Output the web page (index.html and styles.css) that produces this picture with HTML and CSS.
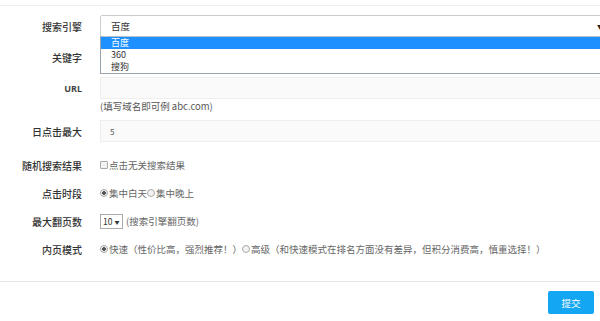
FILE: index.html
```html
<!DOCTYPE html>
<html lang="zh-CN">
<head>
    <meta charset="UTF-8">
    <meta name="viewport" content="width=device-width, initial-scale=1.0">
    <title>添加任务</title>
    <link rel="stylesheet" href="styles.css">
</head>
<body>
    <div class="topbar"></div>
    <form class="task-form">
        <div class="form-row">
            <label class="row-label">搜索引擎</label>
            <div class="row-field">
                <div class="engine-select">
                    <span>百度</span>
                    <span class="caret">&#9660;</span>
                    <ul class="engine-options">
                        <li class="active">百度</li>
                        <li>360</li>
                        <li>搜狗</li>
                    </ul>
                </div>
            </div>
        </div>
        <div class="form-row">
            <label class="row-label">关键字</label>
            <div class="row-field">
                <input type="text" class="text-input" name="keyword">
            </div>
        </div>
        <div class="form-row">
            <label class="row-label latin">URL</label>
            <div class="row-field">
                <input type="text" class="text-input" name="url">
            </div>
        </div>
        <div class="help-text">(填写域名即可例 abc.com)</div>
        <div class="form-row">
            <label class="row-label">日点击最大</label>
            <div class="row-field">
                <input type="text" class="text-input" name="max" value="5">
            </div>
        </div>
        <div class="form-row tall first-tall">
            <label class="row-label">随机搜索结果</label>
            <div class="row-field inline">
                <input type="checkbox" class="tick box"><span>点击无关搜索结果</span>
            </div>
        </div>
        <div class="form-row tall">
            <label class="row-label">点击时段</label>
            <div class="row-field inline">
                <input type="radio" class="tick dot" name="period" checked><span>集中白天</span>
                <input type="radio" class="tick dot" name="period"><span>集中晚上</span>
            </div>
        </div>
        <div class="form-row tall">
            <label class="row-label">最大翻页数</label>
            <div class="row-field inline">
                <span class="page-select">10 <span class="small-caret">&#9660;</span></span>
                <span class="note">(搜索引擎翻页数)</span>
            </div>
        </div>
        <div class="form-row tall">
            <label class="row-label">内页模式</label>
            <div class="row-field inline">
                <input type="radio" class="tick dot" name="mode" checked><span>快速（性价比高，强烈推荐！）</span>
                <input type="radio" class="tick dot" name="mode"><span>高级（和快速模式在排名方面没有差异，但积分消费高，慎重选择！）</span>
            </div>
        </div>
    </form>
    <div class="form-footer">
        <button type="button" class="submit-btn">提交</button>
    </div>
</body>
</html>
```

FILE: styles.css
```css
html, body {
    overflow: hidden;
}

body {
    margin: 0;
    padding: 0;
    width: 600px;
    height: 321px;
    background: #fff;
    font-family: "Noto Sans CJK SC", "Open Sans", sans-serif;
    color: #555;
    font-size: 9.5px;
}

.topbar {
    height: 5px;
    border-bottom: 1px solid #eee;
}

.task-form {
    padding-top: 9px;
    height: 266px;
}

.form-row {
    display: flex;
    align-items: center;
    height: 22px;
    margin-bottom: 9px;
}

.form-row.tall {
    height: 28px;
    margin-bottom: 0;
}

.form-row.first-tall {
    margin-top: 3px;
}

.row-label {
    width: 82px;
    margin-right: 18px;
    text-align: right;
    font-size: 10px;
    font-weight: 500;
    color: #333;
    flex-shrink: 0;
}

.row-label.latin {
    font-family: "Open Sans", sans-serif;
    font-size: 9px;
    font-weight: bold;
    color: #444;
}

.row-field {
    width: 506px;
    height: 100%;
    flex-shrink: 0;
}

.row-field.inline {
    display: flex;
    align-items: center;
    color: #666;
}

.engine-select {
    position: relative;
    box-sizing: border-box;
    height: 22px;
    border: 1px solid #ccc;
    border-radius: 2px;
    background: #fff;
    display: flex;
    align-items: center;
    justify-content: space-between;
    padding: 0 2px 0 10px;
    color: #333;
}

.caret {
    font-size: 6px;
    color: #222;
}

.engine-options {
    position: absolute;
    top: 20px;
    left: -1px;
    right: -1px;
    margin: 0;
    padding: 0;
    list-style: none;
    background: #fff;
    border: 1px solid #9aa3ab;
    border-top-color: #b5c0c8;
    z-index: 2;
}

.engine-options li {
    height: 12px;
    line-height: 12px;
    padding-left: 10px;
    font-size: 9px;
    color: #333;
    overflow: hidden;
}

.engine-options li.active {
    background: #1e90ff;
    color: #fff;
}

.text-input {
    box-sizing: border-box;
    width: 100%;
    height: 22px;
    border: 1px solid #eee;
    background: #fafafa;
    padding: 0 9px;
    font-family: inherit;
    font-size: 8px;
    color: #555;
    outline: none;
}

.help-text {
    margin: -8px 0 0 100px;
    height: 20px;
    line-height: 12px;
    color: #555;
}

.tick {
    appearance: none;
    box-sizing: border-box;
    width: 8px;
    height: 8px;
    margin: 0 1px 0 0;
    border: 1px solid #aaa;
    background: #f2f2f2;
    flex-shrink: 0;
}

.tick.box {
    border-radius: 1px;
}

.tick.dot {
    border-radius: 50%;
}

.tick.dot:checked {
    background: radial-gradient(circle, #555 0 1.6px, #eee 2px);
}

.page-select {
    box-sizing: border-box;
    height: 15px;
    width: 23px;
    border: 1px solid #aaa;
    background: #fff;
    font-size: 8.5px;
    color: #333;
    display: flex;
    align-items: center;
    padding-left: 2px;
    gap: 2px;
}

.small-caret {
    font-size: 5px;
}

.note {
    margin-left: 3px;
}

.form-footer {
    border-top: 1px solid #e5e5e5;
    display: flex;
    justify-content: flex-end;
    padding: 9px 6px 0 0;
}

.submit-btn {
    width: 46px;
    height: 23px;
    border: none;
    border-radius: 2px;
    background: #12a6f3;
    color: #fff;
    font-family: inherit;
    font-size: 9.5px;
    cursor: pointer;
}
```
